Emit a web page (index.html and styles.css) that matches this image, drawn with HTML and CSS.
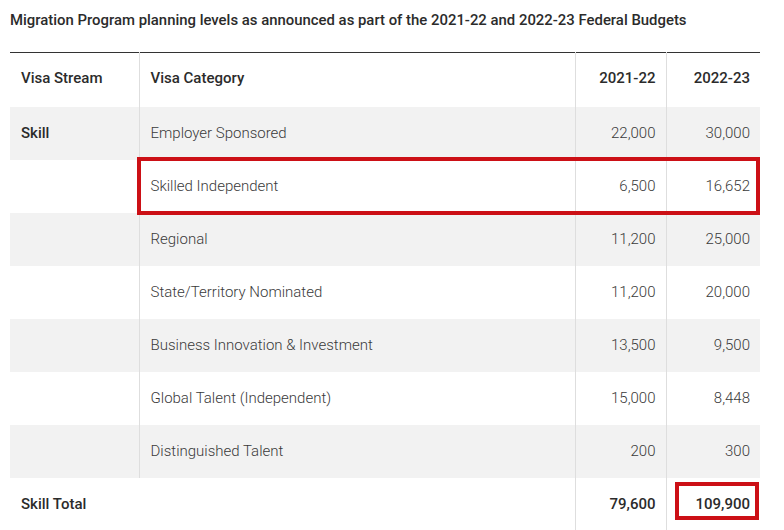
FILE: index.html
```html
<!DOCTYPE html>
<html lang="en">
<head>
<meta charset="utf-8">
<title>Migration Program planning levels</title>
<link rel="stylesheet" href="styles.css">
</head>
<body>
<div class="page">
  <h1 class="caption">Migration Program planning levels as announced as part of the 2021-22 and 2022-23 Federal Budgets</h1>
  <div class="table-wrap">
    <table class="levels">
      <colgroup>
        <col class="c-stream">
        <col class="c-cat">
        <col class="c-y1">
        <col class="c-y2">
      </colgroup>
      <thead>
        <tr>
          <th>Visa Stream</th>
          <th class="sep">Visa Category</th>
          <th class="sep num">2021-22</th>
          <th class="sep num">2022-23</th>
        </tr>
      </thead>
      <tbody>
        <tr class="odd">
          <th>Skill</th>
          <td class="sep">Employer Sponsored</td>
          <td class="sep num">22,000</td>
          <td class="sep num">30,000</td>
        </tr>
        <tr>
          <td></td>
          <td class="sep">Skilled Independent</td>
          <td class="sep num">6,500</td>
          <td class="sep num">16,652</td>
        </tr>
        <tr class="odd">
          <td></td>
          <td class="sep">Regional</td>
          <td class="sep num">11,200</td>
          <td class="sep num">25,000</td>
        </tr>
        <tr>
          <td></td>
          <td class="sep">State/Territory Nominated</td>
          <td class="sep num">11,200</td>
          <td class="sep num">20,000</td>
        </tr>
        <tr class="odd">
          <td></td>
          <td class="sep">Business Innovation &amp; Investment</td>
          <td class="sep num">13,500</td>
          <td class="sep num">9,500</td>
        </tr>
        <tr>
          <td></td>
          <td class="sep">Global Talent (Independent)</td>
          <td class="sep num">15,000</td>
          <td class="sep num">8,448</td>
        </tr>
        <tr class="odd">
          <td></td>
          <td class="sep">Distinguished Talent</td>
          <td class="sep num">200</td>
          <td class="sep num">300</td>
        </tr>
        <tr class="total">
          <th colspan="2">Skill Total</th>
          <th class="sep num">79,600</th>
          <th class="sep num">109,900</th>
        </tr>
      </tbody>
    </table>
    <div class="mark mark-row"></div>
    <div class="mark mark-total"></div>
  </div>
</div>
</body>
</html>
```

FILE: styles.css
```css
html, body {
  margin: 0;
  padding: 0;
  background: #ffffff;
}

body {
  font-family: Roboto, "Liberation Sans", Arial, sans-serif;
  color: #333333;
}

.page {
  padding: 10px 24px 0 10px;
}

.caption {
  margin: 0 0 22px;
  font-size: 14.9px;
  line-height: 20px;
  font-weight: 500;
  color: #2b2b2b;
}

.table-wrap {
  position: relative;
  width: 750px;
}

.levels {
  width: 750px;
  border-collapse: collapse;
  table-layout: fixed;
  border-top: 1px solid #333333;
  font-size: 15px;
}

.c-stream { width: 129px; }
.c-cat { width: 436px; }
.c-y1 { width: 91px; }
.c-y2 { width: 94px; }

.levels tr {
  height: 53px;
}

.levels thead tr {
  height: 54px;
}

.levels th,
.levels td {
  padding: 0 10px 1px 11px;
  vertical-align: middle;
  text-align: left;
  line-height: 20px;
}

.levels thead th {
  padding-bottom: 4px;
}

.levels th {
  font-weight: 500;
  color: #2b2b2b;
}

.levels td {
  font-weight: 300;
  color: #3a3a3a;
}

.levels .sep {
  border-left: 1px solid #dedede;
}

.levels .num {
  text-align: right;
  padding-right: 10px;
}

.levels tr.odd {
  background: #f2f2f2;
}

.mark {
  position: absolute;
  border: 4px solid #cc1016;
  box-sizing: border-box;
  pointer-events: none;
}

.mark-row {
  left: 127px;
  top: 105px;
  width: 623px;
  height: 58px;
}

.mark-total {
  left: 665px;
  top: 430px;
  width: 84px;
  height: 38px;
}
```
